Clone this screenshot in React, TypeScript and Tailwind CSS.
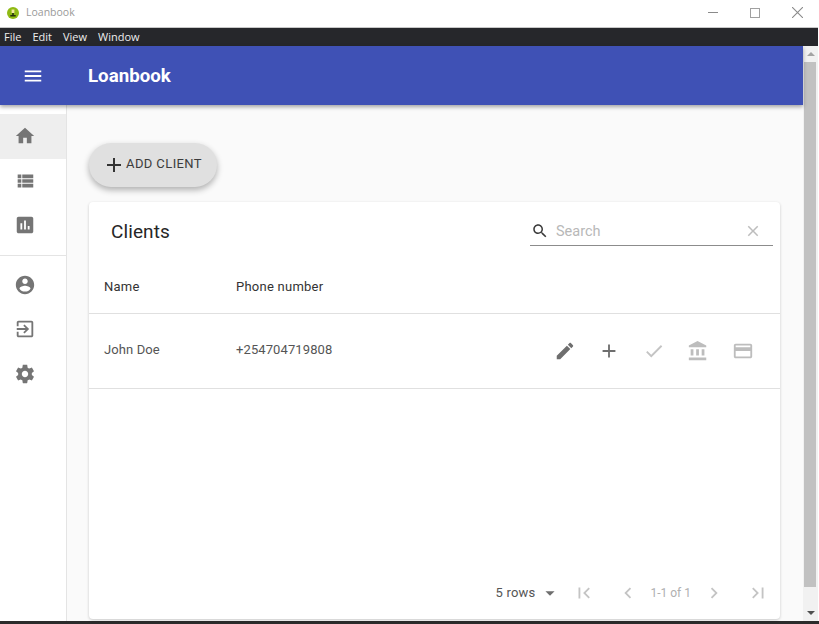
import type { ReactNode } from 'react';

const icons = {
    menu: 'M3 18h18v-2H3v2zm0-5h18v-2H3v2zm0-7v2h18V6H3z',
    home: 'M10 20v-6h4v6h5v-8h3L12 3 2 12h3v8z',
    list: 'M4 14h4v-4H4v4zm0 5h4v-4H4v4zM4 9h4V5H4v4zm5 5h12v-4H9v4zm0 5h12v-4H9v4zM9 5v4h12V5H9z',
    chart: 'M19 3H5c-1.1 0-2 .9-2 2v14c0 1.1.9 2 2 2h14c1.1 0 2-.9 2-2V5c0-1.1-.9-2-2-2zM9 17H7v-7h2v7zm4 0h-2V7h2v10zm4 0h-2v-4h2v4z',
    account: 'M12 2C6.48 2 2 6.48 2 12s4.48 10 10 10 10-4.48 10-10S17.52 2 12 2zm0 3c1.66 0 3 1.34 3 3s-1.34 3-3 3-3-1.34-3-3 1.34-3 3-3zm0 14.2c-2.5 0-4.71-1.28-6-3.22.03-1.99 4-3.08 6-3.08 1.99 0 5.97 1.09 6 3.08-1.29 1.94-3.5 3.22-6 3.22z',
    exit: 'M10.09 15.59L11.5 17l5-5-5-5-1.41 1.41L12.67 11H3v2h9.67l-2.58 2.59zM19 3H5c-1.11 0-2 .9-2 2v4h2V5h14v14H5v-4H3v4c0 1.1.89 2 2 2h14c1.1 0 2-.9 2-2V5c0-1.1-.9-2-2-2z',
    settings: 'M19.43 12.98c.04-.32.07-.64.07-.98s-.03-.66-.07-.98l2.11-1.65c.19-.15.24-.42.12-.64l-2-3.46c-.12-.22-.39-.3-.61-.22l-2.49 1c-.52-.4-1.08-.73-1.69-.98l-.38-2.65C14.46 2.18 14.25 2 14 2h-4c-.25 0-.46.18-.49.42l-.38 2.65c-.61.25-1.17.59-1.69.98l-2.49-1c-.23-.09-.49 0-.61.22l-2 3.46c-.13.22-.07.49.12.64l2.11 1.65c-.04.32-.07.65-.07.98s.03.66.07.98l-2.11 1.65c-.19.15-.24.42-.12.64l2 3.46c.12.22.39.3.61.22l2.49-1c.52.4 1.08.73 1.69.98l.38 2.65c.03.24.24.42.49.42h4c.25 0 .46-.18.49-.42l.38-2.65c.61-.25 1.17-.59 1.69-.98l2.49 1c.23.09.49 0 .61-.22l2-3.46c.12-.22.07-.49-.12-.64l-2.11-1.65zM12 15.5c-1.93 0-3.5-1.57-3.5-3.5s1.57-3.5 3.5-3.5 3.5 1.57 3.5 3.5-1.57 3.5-3.5 3.5z',
    edit: 'M3 17.25V21h3.75L17.81 9.94l-3.75-3.75L3 17.25zM20.71 7.04c.39-.39.39-1.02 0-1.41l-2.34-2.34c-.39-.39-1.02-.39-1.41 0l-1.83 1.83 3.75 3.75 1.83-1.83z',
    add: 'M19 13h-6v6h-2v-6H5v-2h6V5h2v6h6v2z',
    check: 'M9 16.17L4.83 12l-1.42 1.41L9 19 21 7l-1.41-1.41z',
    bank: 'M4 10v7h3v-7H4zm6 0v7h3v-7h-3zM2 22h19v-3H2v3zm14-12v7h3v-7h-3zm-4.5-9L2 6v2h19V6l-9.5-5z',
    card: 'M20 4H4c-1.11 0-1.99.89-1.99 2L2 18c0 1.11.89 2 2 2h16c1.11 0 2-.89 2-2V6c0-1.11-.89-2-2-2zm0 14H4v-6h16v6zm0-10H4V6h16v2z',
    search: 'M15.5 14h-.79l-.28-.27C15.41 12.59 16 11.11 16 9.5 16 5.91 13.09 3 9.5 3S3 5.91 3 9.5 5.91 16 9.5 16c1.61 0 3.09-.59 4.23-1.57l.27.28v.79l5 4.99L20.49 19l-4.99-5zm-6 0C7.01 14 5 11.99 5 9.5S7.01 5 9.5 5 14 7.01 14 9.5 11.99 14 9.5 14z',
    clear: 'M19 6.41L17.59 5 12 10.59 6.41 5 5 6.41 10.59 12 5 17.59 6.41 19 12 13.41 17.59 19 19 17.59 13.41 12z',
    first: 'M18.41 16.59L13.82 12l4.59-4.59L17 6l-6 6 6 6zM6 6h2v12H6z',
    last: 'M5.59 7.41L10.18 12l-4.59 4.59L7 18l6-6-6-6zM16 6h2v12h-2z',
    left: 'M15.41 7.41L14 6l-6 6 6 6 1.41-1.41L10.83 12z',
    right: 'M10 6L8.59 7.41 13.17 12l-4.58 4.59L10 18l6-6z',
    drop: 'M7 10l5 5 5-5z',
};

function Icon({ d, className }: { d: string; className?: string }) {
    return (
        <svg viewBox="0 0 24 24" fill="currentColor" className={className}>
            <path d={d} />
        </svg>
    );
}

function NavItem({ d, active }: { d: string; active?: boolean }) {
    return (
        <div className={`h-[44.5px] flex items-center pl-[14px] ${active ? 'bg-[#eeeeee]' : ''}`}>
            <Icon d={d} className="w-[22px] h-[22px] text-[#757575]" />
        </div>
    );
}

function RowAction({ children }: { children: ReactNode }) {
    return <div className="w-[44.5px] h-[44.5px] flex items-center justify-center">{children}</div>;
}

export default function App() {
    return (
        <div className="w-[819px] h-[624px] overflow-hidden bg-white flex flex-col font-['Roboto',sans-serif]">
            {/* window chrome */}
            <div className="w-[818px] h-[28px] shrink-0 flex items-center pl-[7px] pb-[2px] bg-white border-b border-[#c8c8c8]">
                <svg viewBox="0 0 12 12" className="w-[12px] h-[12px]">
                    <circle cx="6" cy="6" r="6" fill="#8fba14" />
                    <path d="M4.6 2.5h2.8v3.5H4.6z" fill="#f2e9a0" />
                    <path d="M5.2 6h1.6v2h1.9v1.5H3.3V8h1.9z" fill="#23300c" />
                </svg>
                <span className="ml-[7px] text-[10.5px] text-[#9a9a9a] font-['Open_Sans',sans-serif]">Loanbook</span>
                <div className="ml-auto flex items-center text-[#8a8a8a]">
                    <div className="w-[10px] h-px bg-[#8a8a8a] mr-[32px]" />
                    <div className="w-[10px] h-[10px] border border-[#a0a0a0] mr-[32px]" />
                    <svg viewBox="0 0 10 10" className="w-[11px] h-[11px] mr-[15px]" stroke="currentColor" fill="none">
                        <path d="M0 0l10 10M10 0L0 10" />
                    </svg>
                </div>
            </div>
            <div className="w-[818px] h-[18px] shrink-0 bg-[#26272b] flex items-center pl-[4px] gap-[11px] text-[11px] text-[#eeeeee] font-['Open_Sans',sans-serif]">
                <span>File</span>
                <span>Edit</span>
                <span>View</span>
                <span>Window</span>
            </div>

            <div className="flex h-[575px] shrink-0">
                <div className="relative w-[803px] flex flex-col bg-[#fafafa]">
                    <header className="relative z-10 h-[59px] shrink-0 bg-[#3f51b5] flex items-center shadow-[0_2px_4px_rgba(0,0,0,0.35)]">
                        <Icon d={icons.menu} className="w-[22px] h-[22px] ml-[22px] text-white" />
                        <h1 className="ml-[44px] pt-[2px] text-[18.7px] font-bold text-white">Loanbook</h1>
                    </header>

                    <div className="flex flex-1 min-h-0">
                        <nav className="w-[67px] shrink-0 bg-white border-r border-[#e4e4e4] pt-[9px]">
                            <NavItem d={icons.home} active />
                            <NavItem d={icons.list} />
                            <NavItem d={icons.chart} />
                            <div className="h-px bg-[#e4e4e4] mt-[7px] mb-[7px]" />
                            <NavItem d={icons.account} />
                            <NavItem d={icons.exit} />
                            <NavItem d={icons.settings} />
                        </nav>

                        <main className="flex-1 min-w-0 pl-[22px] pr-[23px] pt-[38px]">
                            <button className="w-[128px] h-[44px] rounded-full bg-[#e0e0e0] flex items-center pl-[13px] text-[13px] text-[#3c3c3c] tracking-[0.4px] shadow-[0_3px_6px_rgba(0,0,0,0.3)]">
                                <Icon d={icons.add} className="w-[24px] h-[24px] text-[#333333]" />
                                <span className="pb-[2px]">ADD CLIENT</span>
                            </button>

                            <section className="mt-[15px] h-[417px] bg-white rounded-[4px] shadow-[0_1px_3px_rgba(0,0,0,0.2)] flex flex-col">
                                <div className="h-[58px] shrink-0 flex items-center pl-[22px] pr-[7px]">
                                    <h2 className="pt-[2px] text-[19px] text-[#262626] tracking-[0.1px]">Clients</h2>
                                    <div className="ml-auto w-[243px] h-[29px] flex items-center border-b border-[#8c8c8c] pl-[1px]">
                                        <Icon d={icons.search} className="w-[18px] h-[18px] text-[#3a3a3a]" />
                                        <span className="ml-[7px] pt-[2px] text-[14.5px] text-[#b8b8b8]">Search</span>
                                        <Icon d={icons.clear} className="ml-auto mr-[11px] w-[18px] h-[18px] text-[#bdbdbd]" />
                                    </div>
                                </div>

                                <div className="h-[54px] shrink-0 flex items-center pl-[15px] text-[13px] tracking-[0.25px] text-[#333333] border-b border-[#e0e0e0]">
                                    <span className="w-[132px]">Name</span>
                                    <span>Phone number</span>
                                </div>

                                <div className="h-[75px] shrink-0 flex items-center pl-[15px] pr-[15px] text-[13px] tracking-[0.1px] text-[#555555] border-b border-[#e0e0e0]">
                                    <span className="w-[132px] pb-[2px]">John Doe</span>
                                    <span className="pb-[2px]">+254704719808</span>
                                    <div className="ml-auto flex items-center">
                                        <RowAction><Icon d={icons.edit} className="w-[22px] h-[22px] text-[#6e6e6e]" /></RowAction>
                                        <RowAction><Icon d={icons.add} className="w-[22px] h-[22px] text-[#6e6e6e]" /></RowAction>
                                        <RowAction><Icon d={icons.check} className="w-[22px] h-[22px] text-[#c4c4c4]" /></RowAction>
                                        <RowAction><Icon d={icons.bank} className="w-[22px] h-[22px] text-[#bdbdbd]" /></RowAction>
                                        <RowAction><Icon d={icons.card} className="w-[22px] h-[22px] text-[#bdbdbd]" /></RowAction>
                                    </div>
                                </div>

                                <div className="mt-auto h-[52px] flex items-center justify-end pr-[11px]">
                                    <span className="text-[13px] tracking-[0.2px] text-[#555555]">5 rows</span>
                                    <Icon d={icons.drop} className="ml-[4px] w-[22px] h-[22px] text-[#6e6e6e]" />
                                    <Icon d={icons.first} className="ml-[12px] w-[22px] h-[22px] text-[#c4c4c4]" />
                                    <Icon d={icons.left} className="ml-[22px] w-[22px] h-[22px] text-[#c4c4c4]" />
                                    <span className="ml-[11px] mr-[12px] text-[#b0b0b0] text-[12px]">1-1 of 1</span>
                                    <Icon d={icons.right} className="w-[22px] h-[22px] text-[#c4c4c4]" />
                                    <Icon d={icons.last} className="ml-[22px] w-[22px] h-[22px] text-[#c4c4c4]" />
                                </div>
                            </section>
                        </main>
                    </div>
                </div>

                {/* scrollbar */}
                <div className="w-[15px] shrink-0 bg-[#f1f1f1] flex flex-col pl-[1px]">
                    <div className="h-[16px] w-[13px] flex items-center justify-center">
                        <div className="w-0 h-0 border-x-[4px] border-x-transparent border-b-[4px] border-b-[#a3a3a3]" />
                    </div>
                    <div className="flex-1 w-[12px]">
                        <div className="h-[525px] bg-[#c1c1c1]" />
                    </div>
                    <div className="h-[16px] w-[13px] flex items-center justify-center">
                        <div className="w-0 h-0 border-x-[4px] border-x-transparent border-t-[4px] border-t-[#505050]" />
                    </div>
                </div>
            </div>
            <div className="flex-1 bg-[#2b2b2b]" />
        </div>
    );
}
